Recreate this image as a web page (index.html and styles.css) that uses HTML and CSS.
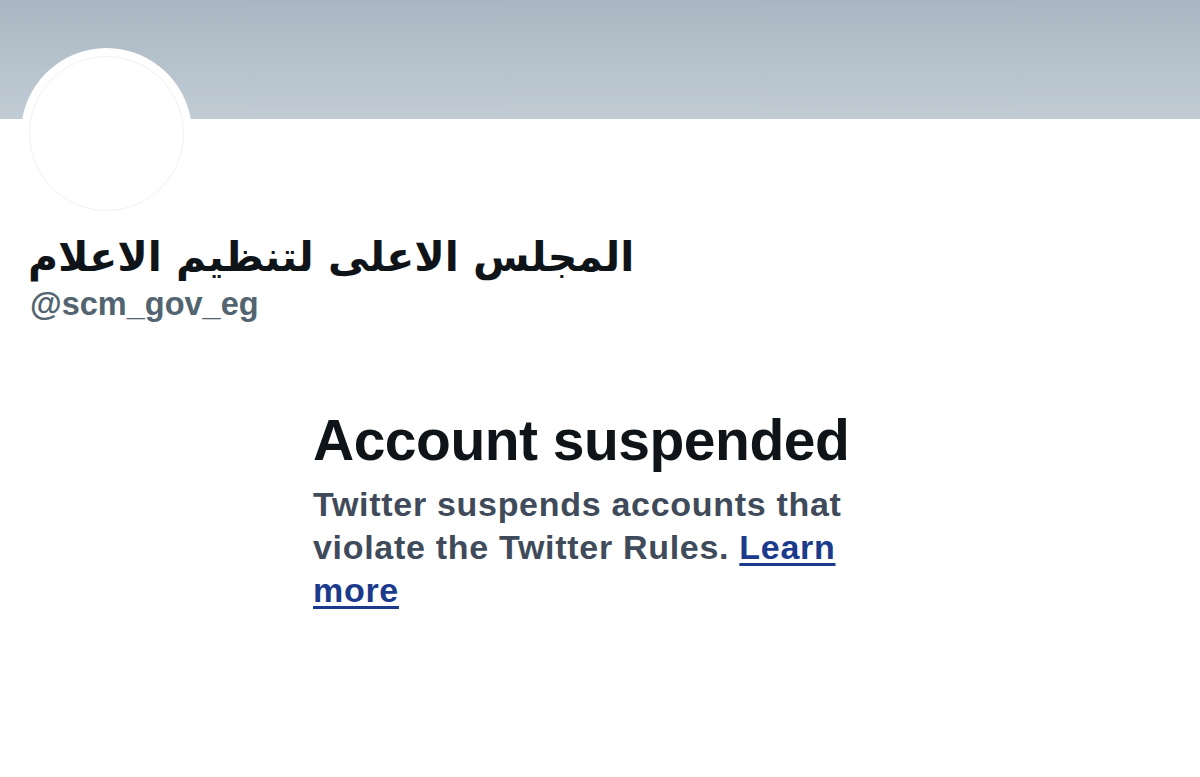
FILE: index.html
```html
<!DOCTYPE html>
<html lang="en">
<head>
  <meta charset="UTF-8"/>
  <title>@scm_gov_eg</title>
  <link rel="stylesheet" href="styles.css">
</head>
<body>

  <!-- Banner -->
  <div class="banner"></div>

  <!-- Perfil -->
  <div class="profile">
    <div class="avatar"><div class="avatar-inner"></div></div>
    <h1 class="name" dir="rtl">المجلس الاعلى لتنظيم الاعلام</h1>
    <div class="handle">@scm_gov_eg</div>
  </div>

  <!-- Conta suspensa -->
  <div class="suspended">
    <h2>Account suspended</h2>
    <p>Twitter suspends accounts that violate the Twitter Rules. <a href="#">Learn more</a></p>
  </div>

</body>
</html>
```

FILE: styles.css
```css
/* === Base === */
* { margin:0; padding:0; box-sizing:border-box; }
body, html { width:100%; height:100%; background:#fff; overflow:hidden; }
body { font-family:"Liberation Sans", Arial, sans-serif; color:#0f1419; }

/* === Banner === */
.banner {
  height: 119px;
  background: linear-gradient(180deg, #a9b6c1, #c1ccd5);
}

/* === Perfil === */
.profile { padding: 0 0 0 21px; }
.avatar {
  width: 171px; height: 171px;
  margin-top: -71px;
  border-radius: 50%;
  background: #fff;
  padding: 8px;
}
.avatar-inner {
  width: 100%; height: 100%;
  border-radius: 50%;
  border: 1px solid #f3f1f0;
}
.name {
  display: inline-block;
  margin: 8px 0 0 7px;
  font-family: "DejaVu Sans", sans-serif;
  font-size: 41px;
  font-weight: bold;
  line-height: 60px;
}
.handle {
  margin: -2px 0 0 9px;
  font-size: 32.5px;
  font-weight: bold;
  color: #536471;
  line-height: 38px;
}

/* === Conta suspensa === */
.suspended {
  width: 560px;
  margin: 86px 0 0 313px;
}
.suspended h2 {
  font-size: 57px;
  line-height: 62px;
  font-weight: bold;
  letter-spacing: -0.5px;
}
.suspended p {
  margin-top: 12px;
  font-size: 34px;
  line-height: 43px;
  font-weight: bold;
  letter-spacing: 0.7px;
  color: #3f4b5a;
}
.suspended a {
  color: #1b3a8c;
  text-decoration: underline;
  text-decoration-thickness: 3px;
  text-underline-offset: 4px;
}
```
